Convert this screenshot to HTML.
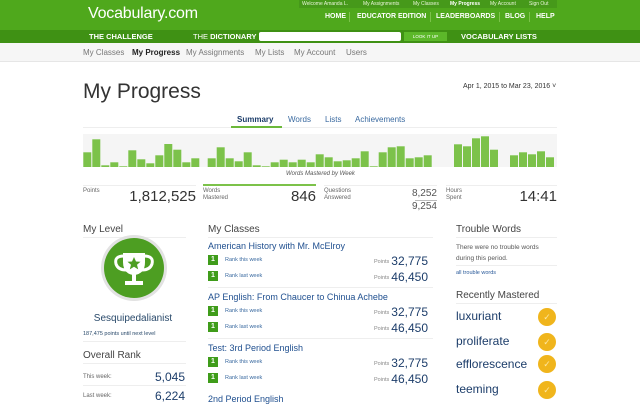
<!DOCTYPE html>
<html><head><meta charset="utf-8"><style>
*{margin:0;padding:0;box-sizing:border-box}
body{width:640px;height:400px;overflow:hidden;background:#fff;font-family:"Liberation Sans","DejaVu Sans",sans-serif;position:relative}
.a{position:absolute;white-space:nowrap}
.top{left:0;top:0;width:640px;height:30px;background:#4fa81c}
.bar2{left:0;top:30px;width:640px;height:13px;background:#3f9114}
.sub{left:0;top:43px;width:640px;height:19px;background:#f6f6f6;border-bottom:1px solid #e6e6e6}
.tl{font-size:5px;color:#e8f5d8;top:1px}
.nv{font-size:7px;font-weight:bold;color:#fff;top:13px}
.sep{top:12px;width:1px;height:10px;background:#7cc24a}
.dk{font-size:7.5px;font-weight:bold;color:#fff;top:32px}
.sn{font-size:8px;color:#777;top:48px}
.h{font-size:10px;color:#444}
.sm{font-size:6px;color:#666}
.ln{height:1px;background:#eee}
.ct{font-size:9px;color:#1f4f8f}
.bd{width:10px;height:10px;background:#3f9c1a;color:#fff;font-size:7px;font-weight:bold;text-align:center;line-height:10px}
.rk{font-size:5.5px;color:#3a6aa0}
.pl{font-size:5.5px;color:#888}
.pv{font-size:12px;color:#1c3d6a;text-align:right;width:40px}
.rw{font-size:12px;color:#1c3d6a}
.gd{width:18px;height:18px;border-radius:50%;background:#f0b51c;color:#fde6a0;font-size:9px;text-align:center;line-height:18px}
</style></head><body>
<div class="a top"></div>
<div class="a" style="left:299px;top:0;width:258px;height:8px;background:#46991a"></div>
<div class="a" style="left:88px;top:5px;font-size:16px;color:#fff;letter-spacing:-0.2px">Vocabulary.com</div>
<div class="a tl" style="left:302px">Welcome Amanda L.</div>
<div class="a tl" style="left:363px">My Assignments</div>
<div class="a tl" style="left:413px">My Classes</div>
<div class="a tl" style="left:450px;font-weight:bold;color:#fff">My Progress</div>
<div class="a tl" style="left:490px">My Account</div>
<div class="a tl" style="left:529px">Sign Out</div>
<div class="a nv" style="left:325px">HOME</div>
<div class="a sep" style="left:349px"></div>
<div class="a nv" style="left:357px">EDUCATOR EDITION</div>
<div class="a sep" style="left:430px"></div>
<div class="a nv" style="left:436px">LEADERBOARDS</div>
<div class="a sep" style="left:499px"></div>
<div class="a nv" style="left:505px">BLOG</div>
<div class="a sep" style="left:529px"></div>
<div class="a nv" style="left:536px">HELP</div>
<div class="a bar2"></div>
<div class="a dk" style="left:89px">THE CHALLENGE</div>
<div class="a dk" style="left:193px;font-weight:normal">THE <b>DICTIONARY</b></div>
<div class="a" style="left:259px;top:32px;width:142px;height:9px;background:#fff;border-radius:2px"></div>
<div class="a" style="left:404px;top:32px;width:43px;height:9px;background:#5cb82a;color:#fff;font-size:4.5px;text-align:center;line-height:9px">LOOK IT UP</div>
<div class="a dk" style="left:461px">VOCABULARY LISTS</div>
<div class="a sub"></div>
<div class="a sn" style="left:83px">My Classes</div>
<div class="a sn" style="left:132px;color:#222;font-weight:bold">My Progress</div>
<div class="a sn" style="left:186px">My Assignments</div>
<div class="a sn" style="left:255px">My Lists</div>
<div class="a sn" style="left:294px">My Account</div>
<div class="a sn" style="left:346px">Users</div>

<div class="a" style="left:83px;top:80px;font-size:21px;color:#333">My Progress</div>
<div class="a" style="left:463px;top:83px;font-size:7px;color:#333">Apr 1, 2015 to Mar 23, 2016 ˅</div>
<div class="a" style="left:237px;top:115px;font-size:8px;color:#1c3d6a;font-weight:bold">Summary</div>
<div class="a" style="left:288px;top:115px;font-size:8px;color:#3a6aa0">Words</div>
<div class="a" style="left:325px;top:115px;font-size:8px;color:#3a6aa0">Lists</div>
<div class="a" style="left:355px;top:115px;font-size:8px;color:#3a6aa0">Achievements</div>
<div class="a ln" style="left:83px;top:127px;width:474px"></div>
<div class="a" style="left:231px;top:126px;width:51px;height:2px;background:#6bb83a"></div>

<svg class="a" style="left:0;top:0" width="640" height="400">
<rect x="83" y="134" width="474" height="33" fill="#f5f5f5"/>
<g fill="#7cc24a" id="b"></g>
</svg>
<div class="a" style="left:286px;top:171px;font-size:6px;color:#555;font-style:italic">Words Mastered by Week</div>

<div class="a ln" style="left:83px;top:185px;width:113px"></div>
<div class="a" style="left:203px;top:184px;width:113px;height:2px;background:#7cc24a"></div>
<div class="a ln" style="left:324px;top:185px;width:113px"></div>
<div class="a ln" style="left:446px;top:185px;width:111px"></div>
<div class="a sm" style="left:83px;top:188px">Points</div>
<div class="a" style="left:120px;top:188px;width:76px;text-align:right;font-size:15px;color:#333">1,812,525</div>
<div class="a sm" style="left:203px;top:188px;line-height:7px">Words<br>Mastered</div>
<div class="a" style="left:260px;top:188px;width:56px;text-align:right;font-size:15px;color:#333">846</div>
<div class="a sm" style="left:324px;top:188px;line-height:7px">Questions<br>Answered</div>
<div class="a" style="left:400px;top:188px;width:37px;text-align:right;font-size:10px;color:#555">8,252</div>
<div class="a ln" style="left:415px;top:200px;width:22px;background:#bbb"></div>
<div class="a" style="left:400px;top:201px;width:37px;text-align:right;font-size:10px;color:#555">9,254</div>
<div class="a sm" style="left:446px;top:188px;line-height:7px">Hours<br>Spent</div>
<div class="a" style="left:500px;top:188px;width:57px;text-align:right;font-size:15px;color:#333">14:41</div>

<div class="a h" style="left:83px;top:224px">My Level</div>
<div class="a ln" style="left:83px;top:237px;width:103px"></div>
<div class="a" style="left:101px;top:235px;width:66px;height:66px;border-radius:50%;background:#e2e2e2"></div>
<div class="a" style="left:104px;top:238px;width:60px;height:60px;border-radius:50%;background:#4d9e22"></div>
<svg class="a" style="left:104px;top:238px" width="60" height="60"><g fill="none" stroke="#fff" stroke-width="3"><path d="M20 18 Q10 18 12 26 Q14 32 22 32"/><path d="M40 18 Q50 18 48 26 Q46 32 38 32"/></g><path d="M19 15 H41 V24 Q41 36 30 37 Q19 36 19 24Z" fill="#fff"/><rect x="28" y="36" width="4" height="8" fill="#fff"/><rect x="21" y="43" width="18" height="4" fill="#fff"/><path d="M30 19 l2 4.5 4.5 .3 -3.5 3 1.2 4.6 -4.2-2.6 -4.2 2.6 1.2-4.6 -3.5-3 4.5-.3z" fill="#4d9e22"/></svg>
<div class="a" style="left:83px;top:313px;width:100px;text-align:center;font-size:10px;color:#2a4a6b">Sesquipedalianist</div>
<div class="a" style="left:83px;top:331px;font-size:5.5px;color:#2a4a6b">187,475 points until next level</div>
<div class="a ln" style="left:83px;top:341px;width:103px"></div>
<div class="a h" style="left:83px;top:350px">Overall Rank</div>
<div class="a ln" style="left:83px;top:363px;width:103px"></div>
<div class="a sm" style="left:83px;top:374px">This week:</div>
<div class="a" style="left:140px;top:370px;width:45px;text-align:right;font-size:12px;color:#1c3d6a">5,045</div>
<div class="a ln" style="left:83px;top:385px;width:103px"></div>
<div class="a sm" style="left:83px;top:393px">Last week:</div>
<div class="a" style="left:140px;top:389px;width:45px;text-align:right;font-size:12px;color:#1c3d6a">6,224</div>

<div class="a h" style="left:208px;top:224px">My Classes</div>
<div class="a ln" style="left:208px;top:237px;width:225px"></div>

<div class="a h" style="left:456px;top:224px">Trouble Words</div>
<div class="a ln" style="left:456px;top:237px;width:101px"></div>
<div class="a" style="left:456px;top:242px;font-size:6.5px;color:#555;line-height:11px">There were no trouble words<br>during this period.</div>
<div class="a ln" style="left:456px;top:265px;width:101px"></div>
<div class="a" style="left:456px;top:270px;font-size:5.5px;color:#2a5a9a">all trouble words</div>
<div class="a h" style="left:456px;top:290px">Recently Mastered</div>
<div class="a ln" style="left:456px;top:303px;width:101px"></div>
<div class="a rw" style="left:456px;top:309px">luxuriant</div>
<div class="a rw" style="left:456px;top:334px">proliferate</div>
<div class="a rw" style="left:456px;top:357px">efflorescence</div>
<div class="a rw" style="left:456px;top:382px">teeming</div>
<div class="a gd" style="left:538px;top:308px">✓</div>
<div class="a gd" style="left:538px;top:333px">✓</div>
<div class="a gd" style="left:538px;top:355px">✓</div>
<div class="a gd" style="left:538px;top:381px">✓</div>

<div class="a ct" style="left:208px;top:241px">American History with Mr. McElroy</div>
<div class="a bd" style="left:208px;top:255px">1</div><div class="a rk" style="left:225px;top:257px">Rank this week</div><div class="a pl" style="left:374px;top:259px">Points</div><div class="a pv" style="left:388px;top:254px">32,775</div>
<div class="a bd" style="left:208px;top:271px">1</div><div class="a rk" style="left:225px;top:273px">Rank last week</div><div class="a pl" style="left:374px;top:275px">Points</div><div class="a pv" style="left:388px;top:270px">46,450</div>
<div class="a ln" style="left:208px;top:287px;width:225px"></div>
<div class="a ct" style="left:208px;top:292px">AP English: From Chaucer to Chinua Achebe</div>
<div class="a bd" style="left:208px;top:306px">1</div><div class="a rk" style="left:225px;top:308px">Rank this week</div><div class="a pl" style="left:374px;top:310px">Points</div><div class="a pv" style="left:388px;top:305px">32,775</div>
<div class="a bd" style="left:208px;top:322px">1</div><div class="a rk" style="left:225px;top:324px">Rank last week</div><div class="a pl" style="left:374px;top:326px">Points</div><div class="a pv" style="left:388px;top:321px">46,450</div>
<div class="a ln" style="left:208px;top:338px;width:225px"></div>
<div class="a ct" style="left:208px;top:343px">Test: 3rd Period English</div>
<div class="a bd" style="left:208px;top:357px">1</div><div class="a rk" style="left:225px;top:359px">Rank this week</div><div class="a pl" style="left:374px;top:361px">Points</div><div class="a pv" style="left:388px;top:356px">32,775</div>
<div class="a bd" style="left:208px;top:373px">1</div><div class="a rk" style="left:225px;top:375px">Rank last week</div><div class="a pl" style="left:374px;top:377px">Points</div><div class="a pv" style="left:388px;top:372px">46,450</div>
<div class="a ct" style="left:208px;top:394px">2nd Period English</div>

<script>
var g=document.getElementById('b'),s='';
function grp(x0,hs){hs.forEach(function(h,i){s+='<rect x="'+(x0+i*9)+'" y="'+(167-h)+'" width="8" height="'+h+'"/>';});}
grp(83.3,[14.7,27.7,1.7,4.7,0.7,16.7,7.7,3.7,11.7,23,17.3,4.7,8.7]);
grp(207.7,[8.7,19.7,8.7,5.7,14.7,1.7,0.7,4.7,7.3,4.7,7.3,4.7,12.7,9.7,5.7,6.7,8.7,15.7,0.7,14.7,19.7,20.7,8.7,9.7,11.7]);
grp(454,[22.7,20.7,28.7,30.7,17.3]);
grp(510,[11.7,14.7,12.7,15.7,9.7]);
g.innerHTML=s;
</script>
</body></html>
